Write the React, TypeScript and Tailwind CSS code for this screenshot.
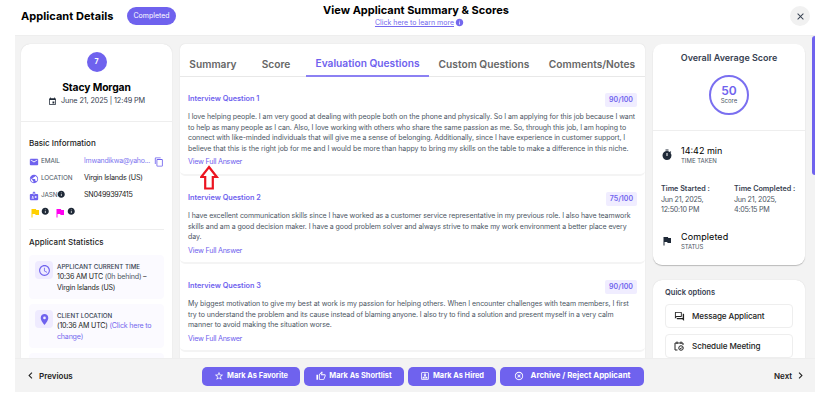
import type { ReactNode } from 'react';
import {
  MdBadge,
  MdChevronLeft,
  MdChevronRight,
  MdClose,
  MdContentCopy,
  MdEmail,
  MdEvent,
  MdFlag,
  MdHighlightOff,
  MdInfo,
  MdLocationOn,
  MdOutlineForum,
  MdOutlinePortrait,
  MdOutlineThumbUp,
  MdPublic,
  MdSchedule,
  MdStarOutline,
  MdTimer,
} from 'react-icons/md';

const TABS = [
  { label: 'Summary', className: 'w-[66px] text-[#666]' },
  { label: 'Score', className: 'w-[60px] text-[#666]' },
  { label: 'Evaluation Questions', className: 'w-[123px] text-[#6f62ee] border-b-2 border-[#8c81f3]' },
  { label: 'Custom Questions', className: 'w-[110px] text-[#666]' },
  { label: 'Comments/Notes', className: 'w-[106px] text-[#666]' },
];

const QUESTIONS = [
  {
    title: 'Interview Question 1',
    score: '90/100',
    height: 'h-[99px]',
    lines: [
      { text: 'I love helping people. I am very good at dealing with people both on the phone and physically. So I am applying for this job because I want', tracking: 'tracking-[-0.065px]' },
      { text: 'to help as many people as I can. Also, I love working with others who share the same passion as me. So, through this job, I am hoping to', tracking: 'tracking-[-0.08px]' },
      { text: 'connect with like-minded individuals that will give me a sense of belonging. Additionally, since I have experience in customer support, I', tracking: 'tracking-[-0.065px]' },
      { text: 'believe that this is the right job for me and I would be more than happy to bring my skills on the table to make a difference in this niche.', tracking: 'tracking-[-0.03px]' },
    ],
  },
  {
    title: 'Interview Question 2',
    score: '75/100',
    height: 'h-[88px]',
    lines: [
      { text: 'I have excellent communication skills since I have worked as a customer service representative in my previous role. I also have teamwork', tracking: 'tracking-[-0.075px]' },
      { text: 'skills and am a good decision maker. I have a good problem solver and always strive to make my work environment a better place every', tracking: 'tracking-[-0.07px]' },
      { text: 'day.', tracking: 'tracking-[-0.07px]' },
    ],
  },
  {
    title: 'Interview Question 3',
    score: '90/100',
    height: 'h-[88px]',
    lines: [
      { text: 'My biggest motivation to give my best at work is my passion for helping others. When I encounter challenges with team members, I first', tracking: 'tracking-[-0.055px]' },
      { text: 'try to understand the problem and its cause instead of blaming anyone. I also try to find a solution and present myself in a very calm', tracking: 'tracking-[-0.08px]' },
      { text: 'manner to avoid making the situation worse.', tracking: 'tracking-[-0.05px]' },
    ],
  },
];

function InfoRow({ icon, label, children }: { icon: ReactNode; label: ReactNode; children?: ReactNode }) {
  return (
    <div className="flex h-[17px] items-center whitespace-nowrap">
      <span className="flex w-[12px] shrink-0 items-center text-[10px] text-[#6f62ee]">{icon}</span>
      <span className="flex w-[43px] shrink-0 items-center text-[6.4px] tracking-[-0.1px] text-[#4b5563]">{label}</span>
      {children}
    </div>
  );
}

function StatCard({ icon, title, children }: { icon: ReactNode; title: string; children: ReactNode }) {
  return (
    <div className="mb-[5px] flex h-[44px] shrink-0 gap-[4px] rounded-[4px] bg-[#fbfaff] pt-[6px] pl-[6px]">
      <div className="flex size-[18px] shrink-0 items-center justify-center rounded-[4px] bg-[#efebff] text-[13px] text-[#6f62ee]">
        {icon}
      </div>
      <div className="text-[7.1px] leading-[10.5px] tracking-[-0.2px] whitespace-nowrap text-[#222]">
        <div className="text-[6.2px] leading-[11px] font-medium tracking-normal text-[#374151]">{title}</div>
        {children}
      </div>
    </div>
  );
}

function Sidebar() {
  return (
    <aside className="h-[330px] w-[151px] shrink-0 rounded-t-[9px] bg-white pt-[8px] shadow-[0_0_1px_#ccc]">
      <div className="mx-auto flex size-[20px] items-center justify-center rounded-full bg-[#6f62ee] text-[7px] font-bold text-white">7</div>
      <div className="mt-[8px] text-center text-[10.3px] leading-[14px] font-bold tracking-[-0.1px] text-black">Stacy Morgan</div>
      <div className="mt-[1px] flex h-[13px] items-center justify-center gap-[4px] text-[7.3px] tracking-[-0.13px] text-[#374151]">
        <MdEvent className="text-[9px] text-[#1f2937]" />
        <span>June 21, 2025 | 12:49 PM</span>
      </div>
      <div className="mt-[13px] border-t border-[#eee]" />
      <div className="px-[8px]">
        <div className="mt-[15px] mb-[4px] text-[8px] leading-[12px] font-medium text-[#222]">Basic Information</div>
        <InfoRow icon={<MdEmail />} label="EMAIL">
          <span className="w-[67px] shrink-0 text-[7px] tracking-[-0.22px] text-[#8177f0]">lmwandikwa@yaho...</span>
          <MdContentCopy className="ml-[3px] shrink-0 text-[10px] text-[#6f62ee]" />
        </InfoRow>
        <InfoRow icon={<MdPublic />} label="LOCATION">
          <span className="text-[7.2px] tracking-[-0.22px] text-[#222]">Virgin Islands (US)</span>
        </InfoRow>
        <InfoRow icon={<MdBadge />} label={<>JASN<MdInfo className="-mt-[2px] text-[8.5px] text-[#1f2937]" /></>}>
          <span className="text-[7.2px] tracking-[-0.32px] text-[#222]">SN0499397415</span>
        </InfoRow>
        <div className="flex h-[17px] items-center">
          <MdFlag className="text-[12px] text-[#ffd000]" />
          <MdInfo className="-mt-[3px] text-[8.5px] text-[#1f2937]" />
          <MdFlag className="ml-[4px] text-[12px] text-[#ff00f0]" />
          <MdInfo className="-mt-[3px] ml-[1px] text-[8.5px] text-[#1f2937]" />
        </div>
        <div className="mt-[8px] border-t border-[#eee]" />
        <div className="mt-[6px] mb-[7px] text-[8px] leading-[12px] font-medium tracking-[0.05px] text-[#222]">Applicant Statistics</div>
        <StatCard icon={<MdSchedule />} title="APPLICANT CURRENT TIME">
          10:36 AM UTC <span className="text-[#4b5563]">(0h behind)</span> –<br />
          Virgin Islands (US)
        </StatCard>
        <StatCard icon={<MdLocationOn />} title="CLIENT LOCATION">
          (10:36 AM UTC) <span className="text-[#7468ee]">(Click here to<br />change)</span>
        </StatCard>
        <div className="h-[44px] rounded-[4px] bg-[#fbfaff]" />
      </div>
    </aside>
  );
}

function Questions() {
  return (
    <main className="relative h-[330px] w-[465px] shrink-0 rounded-t-[5px] bg-white shadow-[0_0_1px_#ccc]">
      <div className="flex h-[33px] border-b border-[#e8e8e8] text-[10.2px] font-semibold">
        {TABS.map((tab) => (
          <div key={tab.label} className={`flex h-[33px] shrink-0 items-center justify-center pt-[8px] whitespace-nowrap ${tab.className}`}>
            {tab.label}
          </div>
        ))}
      </div>
      {QUESTIONS.map((q) => (
        <section key={q.title} className={`rounded-b-[5px] border-b-2 border-[#f4f4f4] px-[8px] pt-[16px] ${q.height}`}>
          <div className="flex h-[19px] items-start justify-between">
            <h3 className="text-[7.3px] leading-[12px] font-semibold text-[#6f62ee]">{q.title}</h3>
            <span className="flex h-[14px] items-center rounded-[2px] bg-[#f0edff] px-[4px] text-[7px] font-semibold text-[#6f62ee]">{q.score}</span>
          </div>
          <p className="text-[7px] leading-[10.5px] whitespace-nowrap text-[#4b5563]">
            {q.lines.map((line) => (
              <span key={line.text} className={`block ${line.tracking}`}>{line.text}</span>
            ))}
          </p>
          <a className="block text-[7.2px] leading-[15px] tracking-[-0.25px] text-[#6f62ee]">View Full Answer</a>
        </section>
      ))}
      <svg className="absolute top-[121px] left-[20px] h-[26px] w-[20px]" viewBox="0 0 20 26" fill="white" stroke="#ec1420" strokeWidth="2.2">
        <path d="M9 2 L16.8 12 H12.8 V23.5 H5.2 V12 H1.2 Z" />
      </svg>
    </main>
  );
}

function ScorePanel() {
  return (
    <aside className="w-[152px] shrink-0">
      <div className="h-[221px] rounded-[9px] bg-white pt-[7px] shadow-[0_1px_1px_#bbb]">
        <div className="text-center text-[9px] leading-[13px] font-semibold text-[#374151]">Overall Average Score</div>
        <div className="mx-auto mt-[11px] flex size-[40px] flex-col items-center justify-center rounded-full border-2 border-[#7a6ff0]">
          <span className="text-[12px] leading-[12px] font-semibold text-[#6f62ee]">50</span>
          <span className="text-[6px] leading-[8px] text-[#4b5563]">Score</span>
        </div>
        <div className="mt-[15px] border-t border-[#eee]" />
        <div className="mt-[14px] flex items-center pl-[8px]">
          <MdTimer className="w-[12px] text-[12px] text-[#1f2937]" />
          <div className="ml-[8px]">
            <div className="text-[9px] leading-[11px] text-black">14:42 min</div>
            <div className="text-[6px] leading-[9px] text-[#4b5563]">TIME TAKEN</div>
          </div>
        </div>
        <div className="mt-[19px] flex pl-[8px] text-[7.2px] leading-[10.5px] tracking-[-0.25px] whitespace-nowrap text-[#4b5563]">
          <div className="w-[73px]">
            <div className="font-semibold tracking-normal text-[#374151]">Time Started :</div>
            Jun 21, 2025,<br />12:50:10 PM
          </div>
          <div>
            <div className="font-semibold tracking-normal text-[#374151]">Time Completed :</div>
            Jun 21, 2025,<br />4:05:15 PM
          </div>
        </div>
        <div className="mt-[15px] flex items-center pl-[8px]">
          <MdFlag className="w-[12px] text-[12px] text-[#1f2937]" />
          <div className="ml-[8px]">
            <div className="text-[9px] leading-[11px] tracking-[0.1px] text-black">Completed</div>
            <div className="text-[6px] leading-[9px] tracking-[-0.15px] text-[#4b5563]">STATUS</div>
          </div>
        </div>
      </div>
      <div className="mt-[15px] h-[100px] rounded-[9px] bg-white px-[12px] pt-[6px] shadow-[0_0_1px_#ccc]">
        <div className="text-[7.5px] leading-[13px] font-semibold text-[#374151]">Quick options</div>
        <div className="mt-[5px] flex h-[24px] items-center gap-[7px] rounded-[4px] border border-[#eee] pl-[8px] text-[8.1px] font-medium tracking-[-0.1px] text-[#222]">
          <MdOutlineForum className="text-[11px]" />
          Message Applicant
        </div>
        <div className="mt-[6px] flex h-[24px] items-center gap-[8px] rounded-[4px] border border-[#eee] pl-[8px] text-[8.1px] font-medium tracking-[-0.1px] text-[#222]">
          <svg className="size-[10px]" viewBox="0 0 20 20" fill="none" stroke="currentColor" strokeWidth="2">
            <path d="M7 18H2V4h16v4M6 1v5M14 1v5" />
            <circle cx="14" cy="14" r="4.5" />
            <path d="M12 14l1.5 1.5 3-3" />
          </svg>
          Schedule Meeting
        </div>
      </div>
    </aside>
  );
}

function ActionButton({ icon, label, className }: { icon: ReactNode; label: string; className: string }) {
  return (
    <button className={`flex h-[19px] shrink-0 items-center justify-center rounded-[5px] bg-[#6f62ee] font-bold whitespace-nowrap text-white ${className}`}>
      <span className="text-[10px]">{icon}</span>
      {label}
    </button>
  );
}

export default function App() {
  return (
    <div className="h-[411px] w-[832px] overflow-hidden bg-white font-['Inter',sans-serif]">
      <header className="flex h-[35px] items-start pl-[21px]">
        <h1 className="w-[106px] pt-[8px] text-[11px] leading-[16px] font-bold tracking-[0.05px] whitespace-nowrap text-black">Applicant Details</h1>
        <span className="mt-[7px] flex h-[18px] w-[49px] items-center justify-center rounded-full bg-[#6f62ee] text-[7px] text-white">Completed</span>
        <div className="ml-[126px] flex w-[228px] flex-col items-center pt-[4px]">
          <div className="text-[11px] leading-[13px] font-bold whitespace-nowrap text-black">View Applicant Summary &amp; Scores</div>
          <div className="flex items-center gap-[1px] pl-[7px] text-[7px] leading-[11px] text-[#7468ee]">
            <span className="underline">Click here to learn more</span>
            <MdInfo className="text-[9px]" />
          </div>
        </div>
        <span className="mt-[6px] ml-[260px] flex size-[20px] items-center justify-center rounded-full bg-[#f1f1f1] text-[11px] text-[#374151]">
          <MdClose />
        </span>
      </header>
      <div className="ml-[15px] w-[800px] bg-[#f3f3f3]">
        <div className="flex h-[323px] overflow-hidden border-t border-[#eee]">
          <div className="flex gap-[8px] pt-[8px] pl-[6px]">
            <Sidebar />
            <Questions />
            <ScorePanel />
          </div>
          <div className="ml-[7px] h-[139px] w-[3px] rounded-l-full bg-[#6f62ee]" />
        </div>
        <footer className="flex h-[34px] items-center border-t border-[#eee] text-[8px] font-semibold text-[#222]">
          <MdChevronLeft className="ml-[9px] text-[13px]" />
          <span className="ml-[2px] w-[163px]">Previous</span>
          <div className="flex gap-[4px] pt-px text-[7.4px]">
            <ActionButton icon={<MdStarOutline />} label="Mark As Favorite" className="w-[98px] gap-[3px]" />
            <ActionButton icon={<MdOutlineThumbUp />} label="Mark As Shortlist" className="w-[100px] gap-[3px]" />
            <ActionButton icon={<MdOutlinePortrait />} label="Mark As Hired" className="w-[88px] gap-[3px]" />
            <ActionButton icon={<MdHighlightOff />} label="Archive / Reject Applicant" className="w-[144px] gap-[7px] text-[7.9px]" />
          </div>
          <span className="ml-[130px]">Next</span>
          <MdChevronRight className="ml-[2px] text-[13px]" />
        </footer>
      </div>
    </div>
  );
}
